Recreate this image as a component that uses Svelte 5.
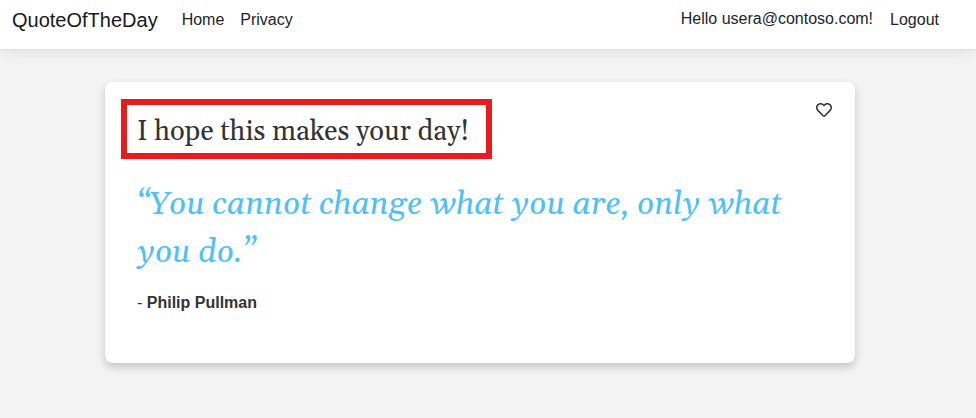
<script>
  const links = ['Home', 'Privacy'];
</script>

<div class="page">
  <header>
    <nav>
      <a class="brand" href="#home">QuoteOfTheDay</a>
      {#each links as link}
        <a class="link" href="#{link}">{link}</a>
      {/each}
    </nav>
    <div class="account">
      <span class="hello">Hello usera@contoso.com!</span>
      <a class="link" href="#logout">Logout</a>
    </div>
  </header>
  <main>
    <article class="card">
      <div class="top">
        <h2>I hope this makes your day!</h2>
        <button aria-label="Like">
          <svg width="16" height="16" viewBox="0 0 512 512"><path fill="currentColor" d="M458.4 64.3C400.6 15.700 311.300 23 256 79.300 200.700 23 111.400 15.600 53.600 64.300-21.600 127.600-10.600 230.800 43 285.500l175.400 178.700c10 10.200 23.400 15.900 37.600 15.900 14.300 0 27.600-5.600 37.600-15.800L469 285.600c53.500-54.700 64.700-157.900-10.600-221.300zm-23.600 187.500L259.400 430.500c-2.400 2.400-4.400 2.400-6.800 0L77.200 251.800c-36.500-37.200-43.900-107.600 7.300-150.700 38.900-32.700 98.900-27.800 136.500 10.500l35 35.700 35-35.700c37.800-38.500 97.800-43.200 136.500-10.600 51.100 43.100 43.500 113.900 7.300 150.800z"/></svg>
        </button>
      </div>
      <blockquote><div>“You cannot change what you are, only what</div><div>you do.”</div></blockquote>
      <p class="author">- <b>Philip Pullman</b></p>
    </article>
  </main>
</div>

<style>
  :global(body) { margin: 0; background: #f3f3f3; }
  .page { height: 418px; overflow: hidden; font: 16px/24px "Liberation Sans", Arial, sans-serif; color: #212529; background: #f3f3f3; }
  header { height: 50px; box-sizing: border-box; padding: 0 37px 10px 12px; display: flex; align-items: center; justify-content: space-between; background: #fff; border-bottom: 1px solid #e0e0e0; box-shadow: 0 4px 12px rgba(0,0,0,.05), -8px 4px 12px rgba(0,0,0,.01), 8px 4px 12px rgba(0,0,0,.01); }
  nav, .account { display: flex; align-items: center; }
  a { color: #212529; text-decoration: none; }
  .brand { font-size: 20px; margin-right: 8px; color: #181a1c; }
  nav .link { margin-left: 16px; }
  .account { gap: 17px; }
  .hello { padding-bottom: 2px; }
  main { display: flex; padding: 32px 0 0 105px; }
  .card { width: 750px; height: 281px; box-sizing: border-box; padding: 17px 16px; background: #fff; border-radius: 8px; box-shadow: 0 4px 8px rgba(0,0,0,.2); }
  .top { display: flex; justify-content: space-between; align-items: flex-start; }
  h2 { margin: 0; box-sizing: border-box; width: 371px; height: 60px; padding: 3px 0 0 10px; border: 6px solid #e81c1c; font: 27.3px/48px Gelasio, Georgia, "DejaVu Serif", serif; color: #333; white-space: nowrap; }
  button { margin: 3px 7px 0 0; padding: 0; border: 0; background: none; color: #333; display: flex; }
  blockquote { margin: 22px 16px 0; font: italic 32px/48px Gelasio, Georgia, "DejaVu Serif", serif; color: #4fc0f8; white-space: nowrap; }
  .author { margin: 14px 16px 0; color: #333; }
</style>
